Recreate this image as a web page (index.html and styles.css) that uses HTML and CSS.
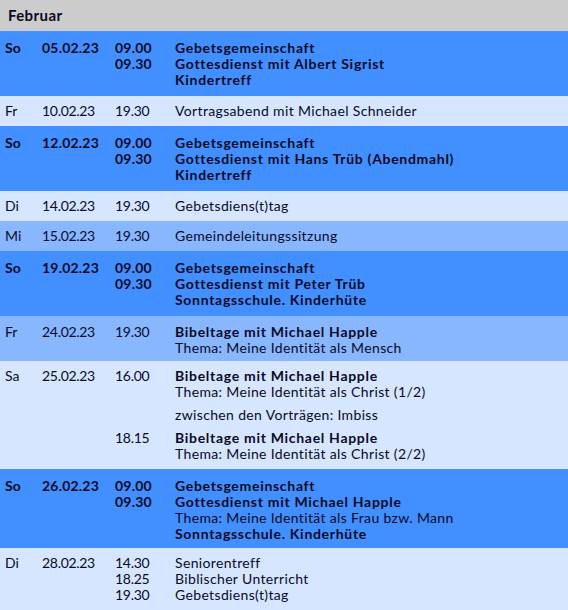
FILE: index.html
```html
<!DOCTYPE html>
<html lang="de">
<head>
<meta charset="utf-8">
<title>Februar</title>
<link rel="stylesheet" href="styles.css">
</head>
<body>
<div class="cal">
  <div class="month">Februar</div>

  <div class="row sun">
    <div class="day">So</div><div class="date">05.02.23</div>
    <div class="entries">
      <div class="entry"><div class="time">09.00<br>09.30</div><div class="text">Gebetsgemeinschaft<br>Gottesdienst mit Albert Sigrist<br>Kindertreff</div></div>
    </div>
  </div>

  <div class="row light">
    <div class="day">Fr</div><div class="date">10.02.23</div>
    <div class="entries">
      <div class="entry"><div class="time">19.30</div><div class="text">Vortragsabend mit Michael Schneider</div></div>
    </div>
  </div>

  <div class="row sun">
    <div class="day">So</div><div class="date">12.02.23</div>
    <div class="entries">
      <div class="entry"><div class="time">09.00<br>09.30</div><div class="text">Gebetsgemeinschaft<br>Gottesdienst mit Hans Trüb (Abendmahl)<br>Kindertreff</div></div>
    </div>
  </div>

  <div class="row light">
    <div class="day">Di</div><div class="date">14.02.23</div>
    <div class="entries">
      <div class="entry"><div class="time">19.30</div><div class="text">Gebetsdiens(t)tag</div></div>
    </div>
  </div>

  <div class="row mid">
    <div class="day">Mi</div><div class="date">15.02.23</div>
    <div class="entries">
      <div class="entry"><div class="time">19.30</div><div class="text">Gemeindeleitungssitzung</div></div>
    </div>
  </div>

  <div class="row sun">
    <div class="day">So</div><div class="date">19.02.23</div>
    <div class="entries">
      <div class="entry"><div class="time">09.00<br>09.30</div><div class="text">Gebetsgemeinschaft<br>Gottesdienst mit Peter Trüb<br>Sonntagsschule. Kinderhüte</div></div>
    </div>
  </div>

  <div class="row mid two">
    <div class="day">Fr</div><div class="date">24.02.23</div>
    <div class="entries">
      <div class="entry"><div class="time">19.30</div><div class="text"><b>Bibeltage mit Michael Happle</b><br>Thema: Meine Identität als Mensch</div></div>
    </div>
  </div>

  <div class="row light">
    <div class="day">Sa</div><div class="date">25.02.23</div>
    <div class="entries spaced">
      <div class="entry"><div class="time">16.00</div><div class="text"><b>Bibeltage mit Michael Happle</b><br>Thema: Meine Identität als Christ (1/2)</div></div>
      <div class="entry"><div class="time"></div><div class="text">zwischen den Vorträgen: Imbiss</div></div>
      <div class="entry"><div class="time">18.15</div><div class="text"><b>Bibeltage mit Michael Happle</b><br>Thema: Meine Identität als Christ (2/2)</div></div>
    </div>
  </div>

  <div class="row sun four">
    <div class="day">So</div><div class="date">26.02.23</div>
    <div class="entries">
      <div class="entry"><div class="time">09.00<br>09.30</div><div class="text">Gebetsgemeinschaft<br>Gottesdienst mit Michael Happle<br><span class="normal">Thema: Meine Identität als Frau bzw. Mann</span><br>Sonntagsschule. Kinderhüte</div></div>
    </div>
  </div>

  <div class="row light">
    <div class="day">Di</div><div class="date">28.02.23</div>
    <div class="entries">
      <div class="entry"><div class="time">14.30<br>18.25<br>19.30</div><div class="text">Seniorentreff<br>Biblischer Unterricht<br>Gebetsdiens(t)tag</div></div>
    </div>
  </div>
</div>
</body>
</html>
```

FILE: styles.css
```css
html, body {
  margin: 0;
  padding: 0;
  background: #d6e6ff;
}
body {
  font-family: Lato, "Open Sans", sans-serif;
  font-size: 14px;
  line-height: 16px;
  color: #0a0a26;
}
.cal {
  width: 568px;
}
.month {
  background: #cccccc;
  height: 31px;
  line-height: 31px;
  padding-left: 8px;
  font-weight: bold;
  font-size: 15px;
  letter-spacing: 0.4px;
}
.row {
  display: grid;
  grid-template-columns: 37px 73px 1fr;
  padding: 7px 0 7px 5px;
}
.row.light { background: #d6e6ff; }
.row.mid { background: #88b7ff; }
.row.sun {
  background: #428fff;
  font-weight: bold;
  padding: 9px 0 8px 5px;
}
.row.two { padding: 8px 0 5px 5px; }
.row.four { padding: 9px 0 6px 5px; }
.date, .time {
  letter-spacing: -0.3px;
}
.row.sun .date, .row.sun .time {
  letter-spacing: 0.2px;
}
.entries {
  display: flex;
  flex-direction: column;
}
.entries.spaced { gap: 7px; }
.entry {
  display: grid;
  grid-template-columns: 60px 1fr;
}
.text {
  letter-spacing: 0.35px;
}
.row.sun .text, .text b {
  letter-spacing: 0.7px;
}
.row.sun .text .normal {
  font-weight: normal;
  letter-spacing: 0.35px;
}
b { font-weight: bold; }
```
